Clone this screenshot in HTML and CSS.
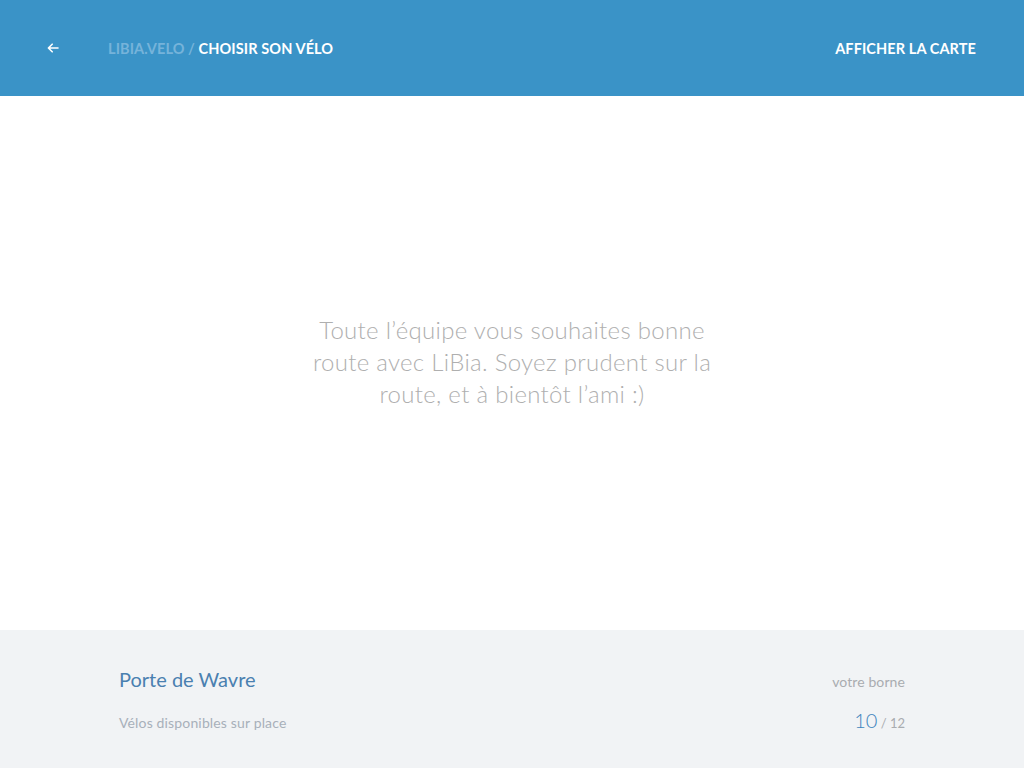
FILE: index.html
```html
<!DOCTYPE html>
<html lang="fr">
<head>
<meta charset="utf-8">
<title>LiBia.velo — Choisir son vélo</title>
<link rel="stylesheet" href="styles.css">
</head>
<body>
<div class="app">
  <header class="topbar">
    <div class="topbar-left">
      <a class="back" href="#" aria-label="Retour">
        <svg width="12" height="10" viewBox="0 0 12 10"><path d="M11 5H1.5M5.2 1.2L1.4 5l3.8 3.8" fill="none" stroke="#fff" stroke-width="1.6" stroke-linecap="round" stroke-linejoin="round"/></svg>
      </a>
      <nav class="crumbs"><span class="crumb-muted">LIBIA.VELO /</span> <span class="crumb-current">CHOISIR SON VÉLO</span></nav>
    </div>
    <a class="map-link" href="#">AFFICHER LA CARTE</a>
  </header>
  <main class="content">
    <p class="message">Toute l’équipe vous souhaites bonne route avec LiBia. Soyez prudent sur la route, et à bientôt l’ami :)</p>
  </main>
  <footer class="station">
    <div class="station-col">
      <div class="station-name">Porte de Wavre</div>
      <div class="station-sub">Vélos disponibles sur place</div>
    </div>
    <div class="station-col right">
      <div class="station-label">votre borne</div>
      <div class="station-count"><span class="count-big">10</span><span class="count-small"> / 12</span></div>
    </div>
  </footer>
</div>
</body>
</html>
```
FILE: styles.css
```css
* { box-sizing: border-box; }
html, body { margin: 0; padding: 0; height: 100%; }
body { font-family: "Lato", "Noto Sans", sans-serif; background: #fff; }
.app { display: flex; flex-direction: column; height: 768px; }
.topbar {
  height: 96px;
  background: #3a93c7;
  display: flex;
  align-items: center;
  justify-content: space-between;
  padding: 0 48px 0 47px;
  flex-shrink: 0;
}
.topbar-left { display: flex; align-items: center; }
.back { display: flex; align-items: center; width: 61px; height: 20px; text-decoration: none; }
.crumbs { font-family: "Lato", sans-serif; font-weight: 700; font-size: 14.5px; letter-spacing: 0.1px; }
.crumb-muted { color: #76b3da; }
.crumb-current { color: #fff; }
.map-link { color: #fff; text-decoration: none; font-weight: 700; font-size: 14.5px; letter-spacing: 0.1px; }
.content {
  flex: 1;
  display: flex;
  align-items: center;
  justify-content: center;
  padding-bottom: 2px;
}
.message {
  margin: 0;
  width: 412px;
  text-align: center;
  color: #afafaf;
  font-size: 24px;
  line-height: 32px;
  font-weight: 300;
  letter-spacing: 0.3px;
}
.station {
  height: 138px;
  flex-shrink: 0;
  background: #f1f3f5;
  display: flex;
  justify-content: space-between;
  padding: 36px 119px 0 119px;
}
.station-col { display: flex; flex-direction: column; }
.station-col.right { align-items: flex-end; }
.station-name { color: #4a80b0; font-size: 20px; line-height: 26px; }
.station-sub { color: #a8b0ba; font-size: 14px; letter-spacing: 0.15px; margin-top: 22px; }
.station-label { color: #a9acb0; font-size: 14px; letter-spacing: 0.1px; line-height: 18px; margin-top: 7px; }
.station-count { margin-top: 19px; line-height: 20px; }
.count-big { color: #3f85bd; font-size: 20px; font-weight: 300; }
.count-small { color: #a9acb0; font-size: 13px; }
```
